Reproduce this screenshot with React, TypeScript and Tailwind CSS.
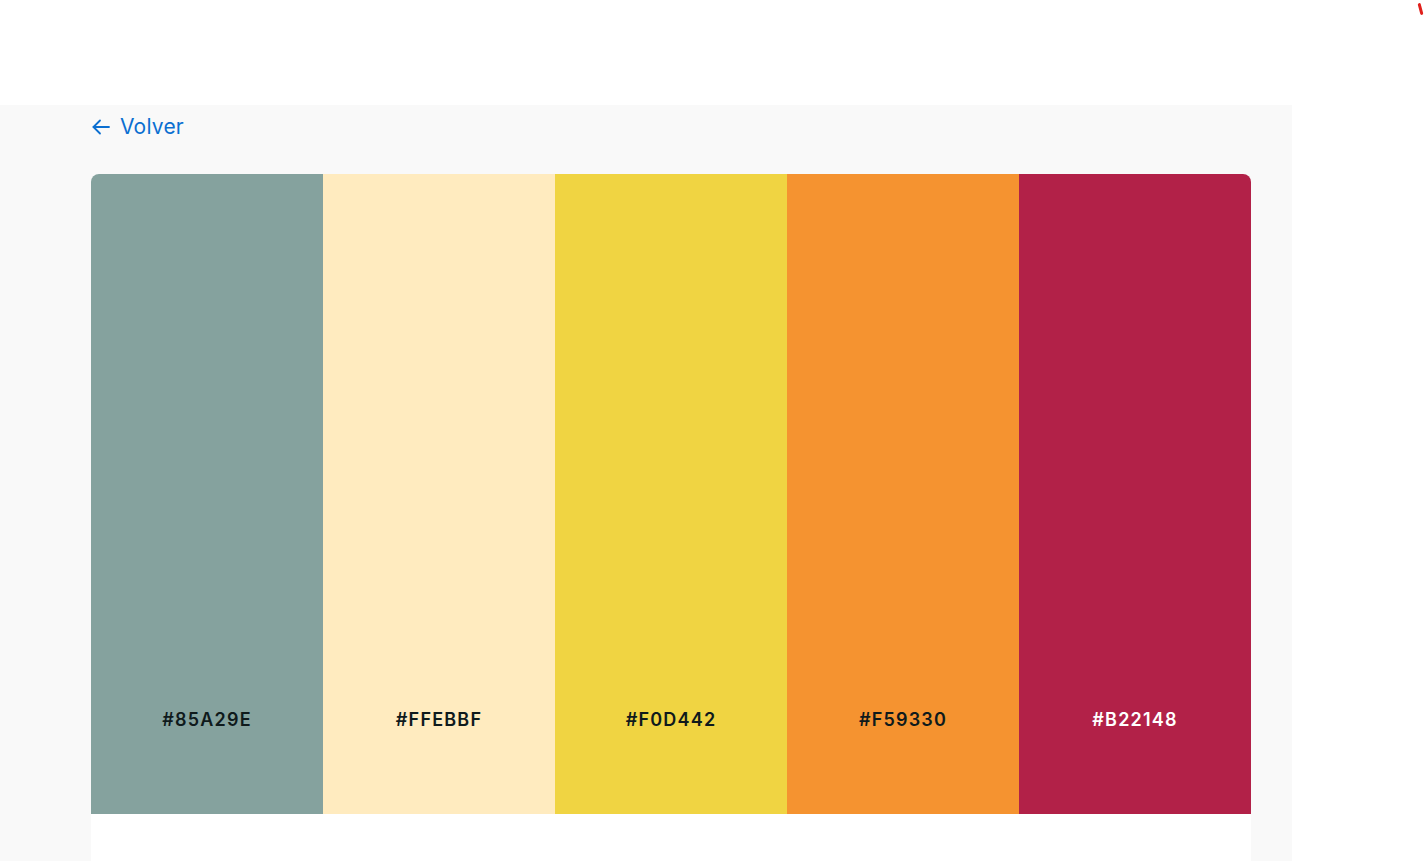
const colors = [
  { hex: '#85A29E', text: 'text-[#0f1a1c]' },
  { hex: '#FFEBBF', text: 'text-[#0f1a1c]' },
  { hex: '#F0D442', text: 'text-[#0f1a1c]' },
  { hex: '#F59330', text: 'text-[#0f1a1c]' },
  { hex: '#B22148', text: 'text-white' },
];

const bgClass: Record<string, string> = {
  '#85A29E': 'bg-[#85A29E]',
  '#FFEBBF': 'bg-[#FFEBBF]',
  '#F0D442': 'bg-[#F0D442]',
  '#F59330': 'bg-[#F59330]',
  '#B22148': 'bg-[#B22148]',
};

export default function App() {
  return (
    <div className="relative min-h-[861px] bg-white font-['Inter',sans-serif]">
      {/* stray mark top-right */}
      <div className="absolute left-[1419px] top-[3px] h-[12px] w-[3px] rotate-[-15deg] rounded-full bg-[#e0201c]" />

      <div className="h-[105px]" />

      <div className="w-[1292px] h-[756px] bg-[#f9f9f9] px-[91px] overflow-hidden">
        <a className="flex items-center gap-[9px] h-[43px] text-[#0b6fd1] text-[21px] w-fit cursor-pointer">
          <svg width="20" height="20" viewBox="0 0 20 20" fill="none" stroke="currentColor" strokeWidth="1.8" strokeLinecap="round" strokeLinejoin="round">
            <path d="M18 10H2.5" />
            <path d="M9 3.5L2.5 10L9 16.5" />
          </svg>
          <span className="tracking-[0.2px]">Volver</span>
        </a>

        <div className="mt-[26px] w-[1160px] rounded-t-[8px] overflow-hidden bg-white">
          <div className="flex h-[640px]">
            {colors.map((c) => (
              <div key={c.hex} className={`flex-1 flex items-end justify-center pb-[81px] ${bgClass[c.hex]}`}>
                <span className={`text-[18px] font-semibold tracking-[1.2px] ${c.text}`}>{c.hex}</span>
              </div>
            ))}
          </div>
          <div className="h-[60px] bg-white" />
        </div>
      </div>
    </div>
  );
}
